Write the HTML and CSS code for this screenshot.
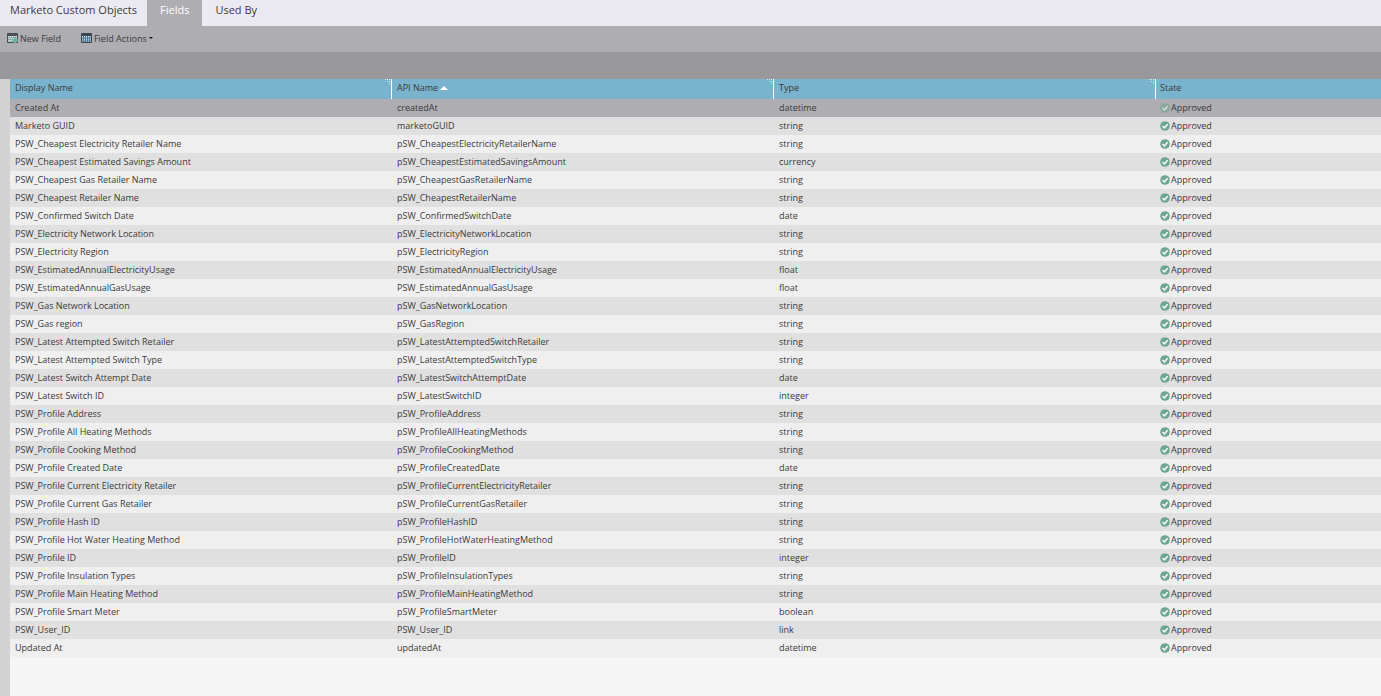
FILE: index.html
```html
<!DOCTYPE html>
<html lang="en">
<head>
<meta charset="utf-8">
<title>Marketo Custom Objects</title>
<link rel="stylesheet" href="styles.css">
</head>
<body>
<svg class="defs" aria-hidden="true">
  <symbol id="check" viewBox="0 0 10 10"><circle cx="5" cy="5" r="4.8" fill="#6fa592"/><path d="M2.6 5.1 4.4 6.9 7.6 3.3" fill="none" stroke="#fff" stroke-width="1.4"/></symbol>
  <symbol id="grip" viewBox="0 0 6 6"><path d="M0 0h1v1H0zM2 0h1v1H2zM4 0h1v1H4zM2 2h1v1H2zM4 2h1v1H4zM4 4h1v1H4z" fill="#dcebf2"/></symbol>
</svg>
<nav class="tabs">
  <button class="tab">Marketo Custom Objects</button>
  <button class="tab active">Fields</button>
  <button class="tab">Used By</button>
</nav>
<div class="toolbar">
  <button class="tool"><svg class="tool-icon" viewBox="0 0 11 10"><rect width="11" height="10" rx="1" fill="#4a5254"/><path d="M1 3h9v6H1z" fill="#a9bcc0"/><path d="M1 3.5h1M3 3.5h1M5 3.5h1M7 3.5h1M9 3.5h1M2 5.5h1M4 5.5h1M6 5.5h1M2 7.5h1M4 7.5h1" stroke="#dfe7e8"/><path d="M2 4.5h1M4 4.5h1M6 4.5h1M3 6.5h1M5 6.5h1M1 6.5h1" stroke="#6e8f93"/><path d="M8 4.5V10M5.2 7.2H11" stroke="#62b497" stroke-width="2"/></svg>New Field</button>
  <button class="tool"><svg class="tool-icon" viewBox="0 0 11 10"><rect width="11" height="10" rx="1" fill="#3b444b"/><path d="M1 3h9v6H1z" fill="#7da9c6"/><path d="M1 3.5h1M3 3.5h1M5 3.5h1M7 3.5h1M9 3.5h1" stroke="#d9e4ea"/><path d="M2.5 3v6M4.5 3v6M6.5 3v6M8.5 3v6" stroke="#4b6a80" stroke-width=".8"/><path d="M1 6.5h1M3 6.5h1M5 6.5h1M7 6.5h1M9 6.5h1" stroke="#a9c9dd"/></svg>Field Actions<span class="caret"></span></button>
</div>
<div class="band"></div>
<main class="panel">
<table class="grid">
<colgroup><col class="col"><col class="col"><col class="col"><col></colgroup>
<thead><tr>
<th>Display Name<svg class="grip"><use href="#grip"/></svg></th>
<th>API Name<span class="sort"></span><svg class="grip"><use href="#grip"/></svg></th>
<th>Type<svg class="grip"><use href="#grip"/></svg></th>
<th>State</th>
</tr></thead>
<tbody>
<tr class="selected"><td>Created At</td><td>createdAt</td><td>datetime</td><td><svg class="check"><use href="#check"/></svg>Approved</td></tr>
<tr><td>Marketo GUID</td><td>marketoGUID</td><td>string</td><td><svg class="check"><use href="#check"/></svg>Approved</td></tr>
<tr><td>PSW_Cheapest Electricity Retailer Name</td><td>pSW_CheapestElectricityRetailerName</td><td>string</td><td><svg class="check"><use href="#check"/></svg>Approved</td></tr>
<tr><td>PSW_Cheapest Estimated Savings Amount</td><td>pSW_CheapestEstimatedSavingsAmount</td><td>currency</td><td><svg class="check"><use href="#check"/></svg>Approved</td></tr>
<tr><td>PSW_Cheapest Gas Retailer Name</td><td>pSW_CheapestGasRetailerName</td><td>string</td><td><svg class="check"><use href="#check"/></svg>Approved</td></tr>
<tr><td>PSW_Cheapest Retailer Name</td><td>pSW_CheapestRetailerName</td><td>string</td><td><svg class="check"><use href="#check"/></svg>Approved</td></tr>
<tr><td>PSW_Confirmed Switch Date</td><td>pSW_ConfirmedSwitchDate</td><td>date</td><td><svg class="check"><use href="#check"/></svg>Approved</td></tr>
<tr><td>PSW_Electricity Network Location</td><td>pSW_ElectricityNetworkLocation</td><td>string</td><td><svg class="check"><use href="#check"/></svg>Approved</td></tr>
<tr><td>PSW_Electricity Region</td><td>pSW_ElectricityRegion</td><td>string</td><td><svg class="check"><use href="#check"/></svg>Approved</td></tr>
<tr><td>PSW_EstimatedAnnualElectricityUsage</td><td>PSW_EstimatedAnnualElectricityUsage</td><td>float</td><td><svg class="check"><use href="#check"/></svg>Approved</td></tr>
<tr><td>PSW_EstimatedAnnualGasUsage</td><td>PSW_EstimatedAnnualGasUsage</td><td>float</td><td><svg class="check"><use href="#check"/></svg>Approved</td></tr>
<tr><td>PSW_Gas Network Location</td><td>pSW_GasNetworkLocation</td><td>string</td><td><svg class="check"><use href="#check"/></svg>Approved</td></tr>
<tr><td>PSW_Gas region</td><td>pSW_GasRegion</td><td>string</td><td><svg class="check"><use href="#check"/></svg>Approved</td></tr>
<tr><td>PSW_Latest Attempted Switch Retailer</td><td>pSW_LatestAttemptedSwitchRetailer</td><td>string</td><td><svg class="check"><use href="#check"/></svg>Approved</td></tr>
<tr><td>PSW_Latest Attempted Switch Type</td><td>pSW_LatestAttemptedSwitchType</td><td>string</td><td><svg class="check"><use href="#check"/></svg>Approved</td></tr>
<tr><td>PSW_Latest Switch Attempt Date</td><td>pSW_LatestSwitchAttemptDate</td><td>date</td><td><svg class="check"><use href="#check"/></svg>Approved</td></tr>
<tr><td>PSW_Latest Switch ID</td><td>pSW_LatestSwitchID</td><td>integer</td><td><svg class="check"><use href="#check"/></svg>Approved</td></tr>
<tr><td>PSW_Profile Address</td><td>pSW_ProfileAddress</td><td>string</td><td><svg class="check"><use href="#check"/></svg>Approved</td></tr>
<tr><td>PSW_Profile All Heating Methods</td><td>pSW_ProfileAllHeatingMethods</td><td>string</td><td><svg class="check"><use href="#check"/></svg>Approved</td></tr>
<tr><td>PSW_Profile Cooking Method</td><td>pSW_ProfileCookingMethod</td><td>string</td><td><svg class="check"><use href="#check"/></svg>Approved</td></tr>
<tr><td>PSW_Profile Created Date</td><td>pSW_ProfileCreatedDate</td><td>date</td><td><svg class="check"><use href="#check"/></svg>Approved</td></tr>
<tr><td>PSW_Profile Current Electricity Retailer</td><td>pSW_ProfileCurrentElectricityRetailer</td><td>string</td><td><svg class="check"><use href="#check"/></svg>Approved</td></tr>
<tr><td>PSW_Profile Current Gas Retailer</td><td>pSW_ProfileCurrentGasRetailer</td><td>string</td><td><svg class="check"><use href="#check"/></svg>Approved</td></tr>
<tr><td>PSW_Profile Hash ID</td><td>pSW_ProfileHashID</td><td>string</td><td><svg class="check"><use href="#check"/></svg>Approved</td></tr>
<tr><td>PSW_Profile Hot Water Heating Method</td><td>pSW_ProfileHotWaterHeatingMethod</td><td>string</td><td><svg class="check"><use href="#check"/></svg>Approved</td></tr>
<tr><td>PSW_Profile ID</td><td>pSW_ProfileID</td><td>integer</td><td><svg class="check"><use href="#check"/></svg>Approved</td></tr>
<tr><td>PSW_Profile Insulation Types</td><td>pSW_ProfileInsulationTypes</td><td>string</td><td><svg class="check"><use href="#check"/></svg>Approved</td></tr>
<tr><td>PSW_Profile Main Heating Method</td><td>pSW_ProfileMainHeatingMethod</td><td>string</td><td><svg class="check"><use href="#check"/></svg>Approved</td></tr>
<tr><td>PSW_Profile Smart Meter</td><td>pSW_ProfileSmartMeter</td><td>boolean</td><td><svg class="check"><use href="#check"/></svg>Approved</td></tr>
<tr><td>PSW_User_ID</td><td>PSW_User_ID</td><td>link</td><td><svg class="check"><use href="#check"/></svg>Approved</td></tr>
<tr><td>Updated At</td><td>updatedAt</td><td>datetime</td><td><svg class="check"><use href="#check"/></svg>Approved</td></tr>
</tbody>
</table>
</main>
</body>
</html>
```

FILE: styles.css
```css
* {
  box-sizing: border-box;
}

body {
  margin: 0;
  min-height: 100vh;
  display: flex;
  flex-direction: column;
  background: #f5f5f5;
  color: #3a3a3c;
  font-family: "Open Sans", sans-serif;
  font-size: 9px;
}

.defs {
  position: absolute;
  width: 0;
  height: 0;
}

button {
  border: 0;
  background: none;
  color: inherit;
  font: inherit;
  cursor: pointer;
}

.tabs {
  display: flex;
  background: #ebeaf2;
}

.tab {
  height: 26px;
  padding: 0 13px 6px;
  font-size: 11px;
  line-height: 20px;
}

.tab:first-child {
  padding-left: 10px;
  padding-right: 10px;
}

.tab.active {
  background: #aeadb2;
  color: #fff;
}

.toolbar {
  display: flex;
  gap: 20px;
  height: 26px;
  padding: 0 7px;
  background: #aeadb2;
}

.tool {
  display: flex;
  align-items: center;
  padding: 0 0 2px;
}

.tool-icon {
  width: 11px;
  height: 10px;
  margin-right: 2px;
}

.caret {
  margin-left: 2px;
  border: 2px solid transparent;
  border-top-color: #111;
  border-bottom: 0;
}

.band {
  height: 27px;
  background: #99989d;
}

.panel {
  flex: 1;
  border-left: 10px solid #d3d3d3;
}

.grid {
  width: 100%;
  table-layout: fixed;
  border-collapse: separate;
  border-spacing: 0;
}

.col {
  width: 382px;
}

th,
td {
  height: 18px;
  padding: 0 5px;
  text-align: left;
  font-weight: 400;
  line-height: 18px;
  white-space: nowrap;
  overflow: hidden;
}

th:last-child,
td:last-child {
  padding-left: 4px;
}

th {
  position: relative;
  height: 20px;
  padding-bottom: 2px;
  background: #7ab3ce;
  border-right: 1px solid #fff;
}

th:last-child {
  border-right: 0;
}

.grip {
  position: absolute;
  top: 0;
  right: 0;
  width: 6px;
  height: 6px;
}

.sort {
  display: inline-block;
  margin-left: 2px;
  border: 4px solid transparent;
  border-top: 0;
  border-bottom-color: #fff;
  vertical-align: 1px;
}

tbody tr {
  background: #efefef;
}

tbody tr:nth-child(even) {
  background: #e0e0e0;
}

tbody tr.selected {
  background: #aeadb2;
}

.check {
  width: 10px;
  height: 10px;
  margin-right: 1px;
  vertical-align: -2px;
}

.selected .check {
  opacity: 0.6;
}
```
